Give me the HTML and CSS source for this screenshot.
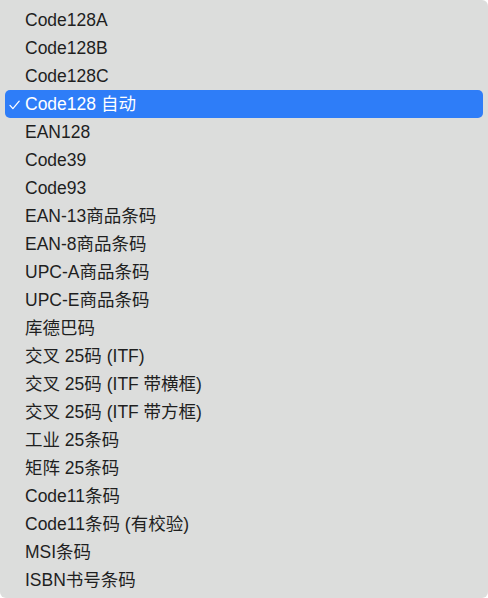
FILE: index.html
```html
<!DOCTYPE html>
<html lang="zh-CN">
<head>
<meta charset="utf-8">
<link rel="stylesheet" href="styles.css">
</head>
<body>
<div class="menu">
  <ul class="list">
    <li class="item">Code128A</li>
    <li class="item">Code128B</li>
    <li class="item">Code128C</li>
    <li class="item selected"><svg class="check" width="12" height="10" viewBox="0 0 12 10"><path d="M1 5.4 L3.9 8.6 L10.2 1.2" fill="none" stroke="#fff" stroke-width="1.3" stroke-linecap="round" stroke-linejoin="round"/></svg>Code128 自动</li>
    <li class="item">EAN128</li>
    <li class="item">Code39</li>
    <li class="item">Code93</li>
    <li class="item">EAN-13商品条码</li>
    <li class="item">EAN-8商品条码</li>
    <li class="item">UPC-A商品条码</li>
    <li class="item">UPC-E商品条码</li>
    <li class="item">库德巴码</li>
    <li class="item">交叉 25码 (ITF)</li>
    <li class="item">交叉 25码 (ITF 带横框)</li>
    <li class="item">交叉 25码 (ITF 带方框)</li>
    <li class="item">工业 25条码</li>
    <li class="item">矩阵 25条码</li>
    <li class="item">Code11条码</li>
    <li class="item">Code11条码 (有校验)</li>
    <li class="item">MSI条码</li>
    <li class="item">ISBN书号条码</li>
  </ul>
</div>
</body>
</html>
```
FILE: styles.css
```css
html, body {
  margin: 0;
  padding: 0;
  background: #ffffff;
}
body {
  width: 488px;
  height: 598px;
  overflow: hidden;
}
.menu {
  width: 488px;
  height: 598px;
  box-sizing: border-box;
  background: #dcdddc;
  border-radius: 0 6px 6px 6px;
  padding: 6px 5px 0 5px;
  font-family: "Liberation Sans", "Noto Sans CJK SC", sans-serif;
  font-size: 17.5px;
  color: #1f1f1f;
}
.list {
  list-style: none;
  margin: 0;
  padding: 0;
}
.item {
  position: relative;
  height: 28px;
  line-height: 28px;
  padding-left: 20px;
  white-space: nowrap;
  border-radius: 5px;
}
.item.selected {
  background: #2e7df8;
  color: #ffffff;
}
.check {
  position: absolute;
  left: 4px;
  top: 10px;
}
```
